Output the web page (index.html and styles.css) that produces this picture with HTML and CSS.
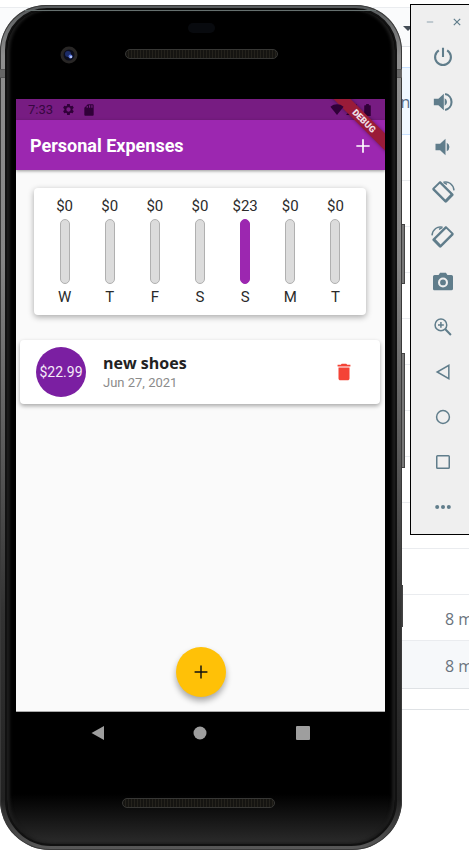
FILE: index.html
```
<!DOCTYPE html>
<html lang="en">
<head>
<meta charset="utf-8">
<meta name="viewport" content="width=device-width, initial-scale=1">
<title>Personal Expenses</title>
<link rel="stylesheet" href="styles.css">
</head>
<body>
<div class="desktop">
  <div class="page">
    <div class="row row-top"></div>
    <div class="row row-head"><span class="caret"></span></div>
    <div class="row row-gap"></div>
    <div class="row row-notice"><a href="#">nd</a></div>
    <div class="row"></div><div class="row"></div><div class="row"></div><div class="row"></div>
    <div class="row"></div><div class="row"></div><div class="row"></div><div class="row"></div>
    <div class="row"></div><div class="row"></div>
    <div class="row"><span class="age">8 m</span></div>
    <div class="row row-hover"><span class="age">8 m</span></div>
    <div class="row row-end"></div>
  </div>

  <div class="key key-power"></div>
  <div class="key key-volume"></div>
  <div class="key key-low"></div>

  <div class="phone">
    <div class="face">
      <div class="forehead">
        <span class="sensor"></span>
        <svg class="camera" viewBox="0 0 18 18" aria-hidden="true"><circle cx="9" cy="9" r="8.5" fill="#282625"/><circle cx="9" cy="9" r="5.5" fill="#0b0d1c"/><circle cx="8" cy="8" r="3" fill="#1c2c68"/><circle cx="10.500" cy="10.500" r="2" fill="#5f7be0"/><circle cx="11" cy="11" r="1" fill="#cbd8ff"/></svg>
        <span class="speaker"></span>
      </div>

      <main class="screen">
        <div class="status">
          <span>7:33</span>
          <svg class="s-gear" viewBox="0 0 24 24"><path fill-rule="evenodd" d="M19.400 13c0-.3.100-.6.100-1s0-.7-.1-1l2.100-1.600c.2-.2.200-.4.100-.6l-2-3.500c-.1-.2-.4-.3-.6-.2l-2.500 1c-.5-.4-1.100-.7-1.700-1L14.400 2.400c0-.2-.2-.4-.5-.4h-4c-.2 0-.4.200-.5.400L9 5.100c-.6.300-1.200.6-1.700 1l-2.500-1c-.2-.1-.5 0-.6.200l-2 3.500c-.1.200-.1.400.1.600L4.500 11c0 .3-.1.700-.1 1s0 .7.100 1l-2.200 1.600c-.2.200-.2.400-.1.600l2 3.500c.1.200.4.300.6.200l2.500-1c.5.400 1.100.7 1.700 1l.4 2.700c.1.200.3.400.5.400h4c.3 0 .5-.2.500-.4l.4-2.700c.6-.3 1.200-.6 1.700-1l2.500 1c.2.100.5 0 .6-.2l2-3.500c.1-.2.100-.4-.1-.6zM12 16a4 4 0 1 1 0-8 4 4 0 0 1 0 8z"/></svg>
          <svg class="s-card" viewBox="0 0 24 24"><path fill-rule="evenodd" d="M18 2h-8L4 8v12c0 1.100.9 2 2 2h12c1.100 0 2-.9 2-2V4c0-1.100-.9-2-2-2zM10 8H8V5h2zm4 0h-2V4h2zm4 0h-2V4h2z"/></svg>
          <span class="spacer"></span>
          <svg class="s-wifi" viewBox="0 0 24 20"><path d="M12 20 0 5C7-1 17-1 24 5z"/></svg>
          <svg class="s-signal" viewBox="0 0 20 20"><path d="M0 20 20 0v20z"/></svg>
          <svg class="s-battery" viewBox="0 0 12 22"><path d="M1 2.500h2.500V0h5v2.500H11q1 0 1 1V21q0 1-1 1H1q-1 0-1-1V3.500q0-1 1-1z"/></svg>
        </div>
        <header class="appbar">
          <h1>Personal Expenses</h1>
          <button class="add" aria-label="Add expense"><svg viewBox="0 0 24 24"><path d="M20 13h-7v7h-2v-7H4v-2h7V4h2v7h7z"/></svg></button>
        </header>
        <div class="banner">DEBUG</div>

        <section class="content">
          <div class="card chart">
            <div class="day"><span>$0</span><i class="bar"></i><span>W</span></div>
            <div class="day"><span>$0</span><i class="bar"></i><span>T</span></div>
            <div class="day"><span>$0</span><i class="bar"></i><span>F</span></div>
            <div class="day"><span>$0</span><i class="bar"></i><span>S</span></div>
            <div class="day"><span>$23</span><i class="bar full"></i><span>S</span></div>
            <div class="day"><span>$0</span><i class="bar"></i><span>M</span></div>
            <div class="day"><span>$0</span><i class="bar"></i><span>T</span></div>
          </div>
          <article class="card expense">
            <span class="amount">$22.99</span>
            <div class="info"><h2>new shoes</h2><time datetime="2021-06-27">Jun 27, 2021</time></div>
            <button class="delete" aria-label="Delete expense"><svg viewBox="0 0 24 24"><path d="M6 19c0 1.100.9 2 2 2h8c1.100 0 2-.9 2-2V7H6zM19 4h-3.500l-1-1h-5l-1 1H5v2h14z"/></svg></button>
          </article>
        </section>
        <button class="fab" aria-label="New expense"><svg viewBox="0 0 24 24"><path d="M19 12.800h-6.200V19h-1.600v-6.200H5v-1.600h6.200V5h1.600v6.200H19z"/></svg></button>
      </main>

      <nav class="softkeys">
        <button aria-label="Back"><svg viewBox="0 0 16 16"><path d="M14 1v14L1.500 8z"/></svg></button>
        <button aria-label="Home"><svg viewBox="0 0 16 16"><circle cx="8" cy="8" r="6.500"/></svg></button>
        <button aria-label="Overview"><svg viewBox="0 0 16 16"><rect x="1" y="1" width="14" height="14" rx="1"/></svg></button>
      </nav>
      <div class="chin"><span class="speaker"></span></div>
    </div>
    <span class="seam seam-left"></span>
    <span class="seam seam-right"></span>
  </div>

  <aside class="tools">
    <div class="window">
      <button aria-label="Minimize"><svg viewBox="0 0 10 10"><path class="dim" d="M1 5h8"/></svg></button>
      <button aria-label="Close"><svg viewBox="0 0 10 10"><path d="m1 1 8 8m0-8-8 8"/></svg></button>
    </div>
    <button aria-label="Power"><svg viewBox="0 0 24 24"><path class="thick" d="M12 1v11M7 4a9.500 9.500 0 1 0 10 0"/></svg></button>
    <button aria-label="Volume up"><svg viewBox="0 0 24 24"><path class="fill" d="M1 8v8h5.500L13 22V2L6.500 8zM14 7.500v9a5 5 0 0 0 0-9z"/><path class="thick" d="M14.500 2.500a9.700 9.700 0 0 1 0 19"/></svg></button>
    <button aria-label="Volume down"><svg viewBox="0 0 24 24"><path class="fill" d="M3 8v8h5.500L15 22V2L8.500 8zM16.500 7v10a5.500 5.500 0 0 0 0-10z"/></svg></button>
    <button aria-label="Rotate left"><svg class="wide" viewBox="0 0 24 24"><path class="fill" fill-rule="evenodd" d="M10.200 1.700c-.6-.6-1.500-.6-2.100 0L1.700 8.100c-.6.600-.6 1.500 0 2.100l12 12c.6.600 1.500.6 2.100 0l6.400-6.400c.6-.6.600-1.500 0-2.100zM8.800 3.700 19.400 14.300 14.400 19.400 3.700 8.800z"/><path d="M12.500 2.300c5-1.500 9.800 2 10.500 8M12.500 2.300l3.500 2"/></svg></button>
    <button aria-label="Rotate right"><svg class="wide flip" viewBox="0 0 24 24"><path class="fill" fill-rule="evenodd" d="M10.200 1.700c-.6-.6-1.500-.6-2.100 0L1.700 8.100c-.6.600-.6 1.500 0 2.100l12 12c.6.600 1.500.6 2.100 0l6.400-6.400c.6-.6.600-1.500 0-2.100zM8.800 3.700 19.400 14.300 14.400 19.400 3.700 8.800z"/><path d="M12.500 2.300c5-1.500 9.800 2 10.500 8M12.500 2.300l3.500 2"/></svg></button>
    <button aria-label="Screenshot"><svg viewBox="0 0 24 24"><path class="fill" fill-rule="evenodd" d="M8.500 1 6.700 3.500H2a2 2 0 0 0-2 2v14.500c0 1.100.9 2 2 2h20a2 2 0 0 0 2-2V5.500a2 2 0 0 0-2-2h-4.700L15.500 1zM12 18.500a6 6 0 1 1 0-12 6 6 0 0 1 0 12zm0-2.500a3.500 3.500 0 1 0 0-7 3.500 3.500 0 0 0 0 7z"/></svg></button>
    <button aria-label="Zoom"><svg viewBox="0 0 24 24"><circle cx="9.500" cy="9.500" r="7" class="mid"/><path class="mid" d="M9.500 6v7M6 9.500h7"/><path class="thick" d="m14.500 14.500 7 7"/></svg></button>
    <button aria-label="Back"><svg viewBox="0 0 24 24"><path class="mid" d="M19 4v16L5 12z"/></svg></button>
    <button aria-label="Home"><svg viewBox="0 0 24 24"><circle class="mid" cx="12" cy="12" r="7.700"/></svg></button>
    <button aria-label="Overview"><svg viewBox="0 0 24 24"><rect class="mid" x="4.500" y="4.500" width="15" height="15" rx="1"/></svg></button>
    <button aria-label="More"><svg viewBox="0 0 24 24"><g class="fill"><circle cx="5" cy="12" r="2.400"/><circle cx="12" cy="12" r="2.400"/><circle cx="19" cy="12" r="2.400"/></g></svg></button>
  </aside>
</div>
</body>
</html>
```
FILE: styles.css
```
* { box-sizing: border-box; }
body { margin: 0; background: #fff; font-family: Roboto, "Liberation Sans", sans-serif; }
button { margin: 0; padding: 0; border: 0; background: none; display: flex; align-items: center; justify-content: center; }
h1, h2 { margin: 0; }
svg { display: block; }

.desktop { position: relative; min-height: 100vh; overflow: hidden; }

/* Browser page behind the emulator */
.page { font: 16px/24px "Open Sans", sans-serif; color: #6a737d; }
.row { height: 46px; padding-top: 2px; border-bottom: 1px solid #eaecef; display: flex; align-items: center; justify-content: flex-end; }
.row-top { height: 8px; }
.row-head { height: 39px; background: #fafbfc; border-color: #e1e4e8; padding-right: 56px; }
.row-gap { height: 21px; border-color: #c8e1ff; }
.row-notice { height: 67px; background: #f1f8ff; border-color: #c8e1ff; padding-right: 49px; }
.row-notice a { color: #586f88; text-decoration: none; }
.row-hover { height: 48px; background: #f6f8fa; border-color: #dfe2e5; }
.row-end { height: 21px; border-color: #dfe2e5; }
.caret { border: 5px solid transparent; border-top-color: #444d56; border-bottom: 0; }
.age { width: 24px; white-space: nowrap; }

/* Emulated phone */
.phone {
  position: absolute; inset: 5px 67px 1px 0; padding: 3px 5px 4px;
  display: flex; border-radius: 46px 46px 50px 50px;
  background: linear-gradient(#55585a, #8e8e8e 6%, #858585 30%, #555 55%, #333 72%, #222 94%, #5a5a5a);
  box-shadow: inset 0 0 0 1px #3a3a3a;
}
.face {
  flex: 1; min-width: 0; display: flex; flex-direction: column; padding: 0 10px 0 9px;
  border: 2px solid #111; border-radius: 42px 42px 46px 46px;
  background: linear-gradient(#000 94%, #2b2b2b);
  box-shadow: inset 3px 0 3px #1c1c1c, inset -3px 0 3px #1c1c1c;
}
.forehead {
  position: relative; height: 89px; margin: 0 9px; display: flex; justify-content: center;
  padding: 38px 0 0 1px; border-top: 1px solid #66706f;
}
.sensor { position: absolute; top: 12px; left: calc(50% - 13px); width: 27px; height: 10px; border-radius: 5px; background: #080a0e; }
.camera { position: absolute; left: 35px; top: 35px; width: 18px; height: 18px; }
.speaker {
  width: 153px; height: 10px; border: 1px solid #373735; border-radius: 5px;
  background: repeating-linear-gradient(90deg, #151411 0 2px, #24221c 2px 3px);
}
.seam { position: absolute; top: 64px; width: 5px; height: 9px; background: #666; border: solid #555; border-width: 1px 0; }
.seam-left { left: 0; }
.seam-right { right: 0; }
.screen { position: relative; flex: 1; display: flex; flex-direction: column; overflow: hidden; background: #fafafa; border-bottom: 1px solid #aaa; }
.status { height: 21px; padding: 0 14px 0 12px; display: flex; align-items: center; background: #771c82; color: #360740; font-size: 13px; line-height: 21px; }
.status svg { fill: #300038; }
.s-gear { width: 13px; height: 13px; margin-left: 9px; }
.s-card { width: 14px; height: 14px; margin-left: 7px; }
.spacer { flex: 1; }
.s-wifi { position: relative; z-index: 1; width: 14px; height: 11px; }
.s-signal { width: 11px; height: 11px; margin: 0 7px 0 2px; }
.s-battery { width: 7px; height: 12px; }
.appbar {
  height: 50px; padding: 1px 12px 0 14px; display: flex; align-items: center; justify-content: space-between;
  background: #9c27b0; color: #fff; box-shadow: 0 1px 3px #0006;
}
.appbar h1 { font-size: 18px; line-height: 25px; font-weight: 700; }
.add svg { width: 20px; height: 20px; fill: #fff; }
.banner {
  position: absolute; top: 16px; right: -29px; width: 100px; height: 12px; transform: rotate(45deg);
  background: #9a1b38; color: #eedfe6; box-shadow: 0 0 4px #0006; text-align: center; font-size: 9px; line-height: 12px; font-weight: 900;
}
.content { padding: 18px 5px 0 4px; }
.card { background: #fff; border-radius: 4px; }
.chart { margin: 0 14px; padding: 8px; display: flex; box-shadow: 0 2px 6px #0005; color: #2b2b2b; font-size: 15px; line-height: 20px; }
.day { flex: 1; display: flex; flex-direction: column; align-items: center; }
.bar { width: 10px; height: 65px; margin: 3px 0; border: 1px solid #b0b0b0; border-radius: 5px; background: #dcdcdc; }
.bar.full { background: #9c27b0; border-color: #9c27b0; }
.expense { margin-top: 25px; height: 64px; padding: 0 25px 0 16px; display: flex; align-items: center; box-shadow: 0 2px 4px #0005; }
.amount { width: 50px; height: 50px; border-radius: 50%; background: #7b1fa2; color: #f5eaf8; font-size: 14px; line-height: 50px; text-align: center; }
.info { flex: 1; margin-left: 17px; padding-bottom: 1px; }
.info h2 { font: 700 16px/22px "Open Sans", sans-serif; color: #222; }
.info time { display: block; color: #8b8b8b; font-size: 13px; line-height: 18px; }
.delete svg { width: 22px; height: 22px; fill: #f44336; }
.fab { width: 50px; height: 50px; margin: auto auto 14px; border-radius: 50%; background: #ffc107; box-shadow: 0 4px 6px #0005; }
.fab svg { width: 22px; height: 22px; fill: #111; }
.softkeys { height: 42px; padding: 0 31px; display: flex; justify-content: space-around; align-items: center; }
.softkeys svg { width: 16px; height: 16px; fill: #9e9e9e; }
.chin { height: 90px; padding: 44px 4px 0 0; display: flex; justify-content: center; }

/* Side keys of the phone */
.key { position: absolute; right: 64px; width: 6px; background: #777; border: 1px solid #444; }
.key-power { top: 224px; height: 60px; }
.key-volume { top: 353px; height: 115px; }
.key-low { top: 585px; height: 42px; right: 66px; }

/* Emulator toolbar */
.tools { position: absolute; top: 4px; right: -7px; width: 66px; padding-bottom: 5px; border: 1px solid #000; background: #efefef; }
.tools button { width: 100%; height: 45px; }
.tools svg { width: 20px; height: 20px; fill: none; stroke: #607d8b; stroke-width: 1.500; }
.tools .wide { width: 24px; height: 24px; }
.tools .thick { stroke-width: 2.500; }
.tools .mid { stroke-width: 1.800; }
.tools .fill { fill: #607d8b; stroke: none; }
.tools .dim { stroke: #9fb0b9; }
.tools .flip { transform: scaleX(-1); }
.tools .window { height: 29px; padding: 4px 5px 0; display: flex; }
.tools .window button { height: 26px; }
.tools .window svg { width: 8px; height: 8px; }
```
